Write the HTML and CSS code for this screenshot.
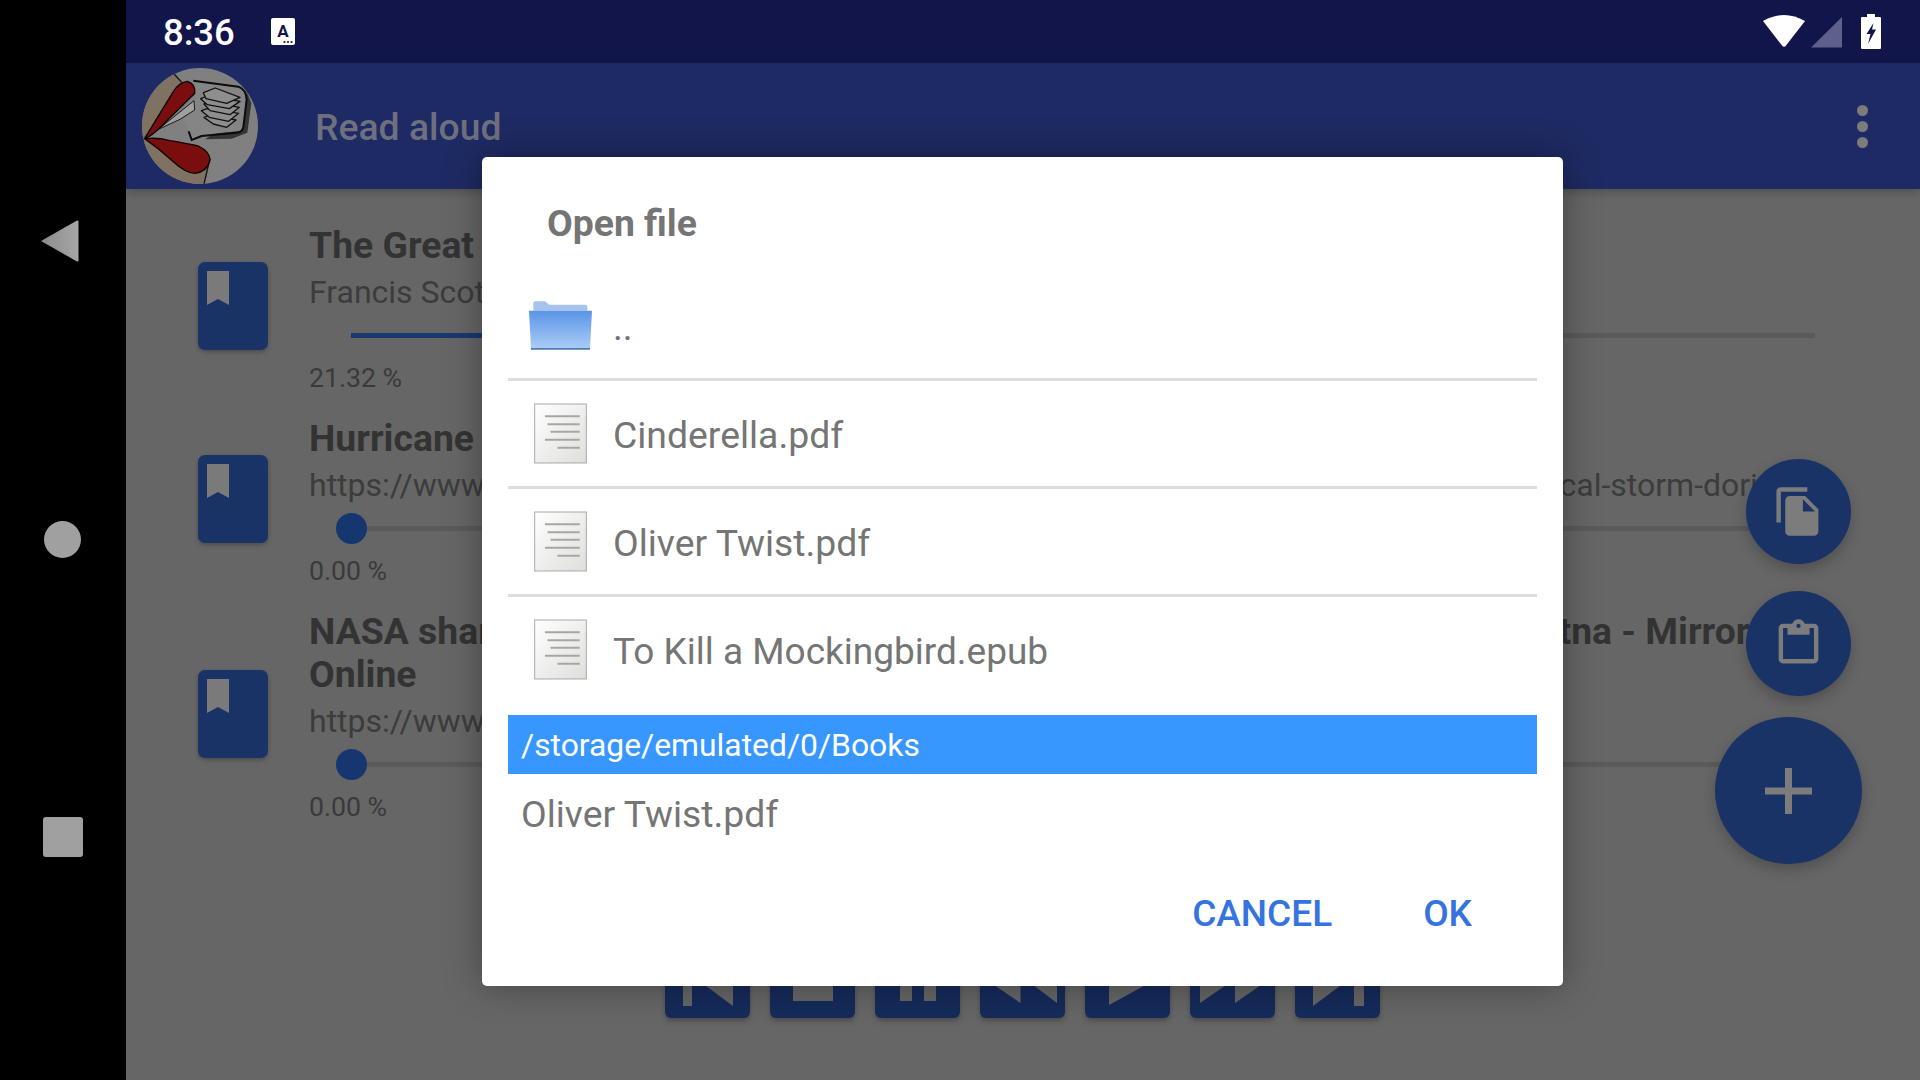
FILE: index.html
```html
<!DOCTYPE html>
<html lang="en">
<head>
<meta charset="utf-8">
<title>Read aloud</title>
<link rel="stylesheet" href="styles.css">
</head>
<body>
<div class="screen">
  <nav class="navbar">
    <svg class="nav-icon" viewBox="0 0 40 44"><defs><linearGradient id="backfill" x1="0" x2="1"><stop offset="0" stop-color="#8c8c8c"/><stop offset="1" stop-color="#a6a6a6"/></linearGradient></defs><path d="M1 22 37 1.500Q38.500 1 38.500 3V41Q38.500 43 37 42.500Z" fill="url(#backfill)"/></svg>
    <div class="nav-circle"></div>
    <div class="nav-square"></div>
  </nav>
  <div class="main">
    <header class="statusbar">
      <span class="clock">8:36</span>
      <svg class="a-icon" viewBox="0 0 24 27"><rect width="24" height="27" rx="2" fill="#fff"/><text x="12" y="19" class="a-letter">A</text><circle cx="13.500" cy="24" r="1.100" fill="#11154a"/><circle cx="17" cy="24" r="1.100" fill="#11154a"/><circle cx="20.500" cy="24" r="1.100" fill="#11154a"/></svg>
      <span class="spacer"></span>
      <svg class="wifi" viewBox="0 0 44 36"><path d="M1 7Q22-5 43 7L24 31.500Q22 34 20 31.500Z" fill="#fff"/></svg>
      <svg class="signal" viewBox="0 0 32 32"><path d="M0 31.500 31 1V31.500Z" fill="#5f5f8c"/></svg>
      <svg class="battery" viewBox="0 0 20 35"><path d="M6 0H14V3H19Q20 3 20 4V34Q20 35 19 35H1Q0 35 0 34V4Q0 3 1 3H6Z" fill="#fff"/><path d="M12.500 9 5.500 20H9.500L7 30 15 15.500H11Z" fill="#11154a"/></svg>
    </header>
    <div class="appbar">
      <svg class="logo" viewBox="36 24 348 348">
        <defs><clipPath id="logoclip"><circle cx="210" cy="198" r="174"/></clipPath></defs>
        <g clip-path="url(#logoclip)">
          <rect x="36" y="24" width="348" height="348" fill="#808080"/>
          <path d="M36 24H128L155 65 130 95 45 235 120 240 200 255 240 295 222 384H36Z" fill="#7f7262"/>
          <path d="M132 42 156 68M240 295 222 372" fill="none" stroke="#141414" stroke-width="4"/>
          <path d="M350 95 364 130 352 218 305 236 225 238 250 222 340 205Z" fill="#1c1c1c" opacity=".75"/>
          <path d="M196 66 325 82Q345 88 347 118L338 200Q335 214 320 214L215 224 185 236 178 212 160 180 196 120Z" fill="#858585"/>
          <path d="M190 62 325 80Q348 88 350 118L340 202Q336 218 320 218L215 228 185 240 176 214" fill="none" stroke="#0c0c0c" stroke-width="6"/>
          <path d="M85 208 192 122 194 150 150 178Z" fill="#a0a0a0" stroke="#1a1a1a" stroke-width="3"/>
          <path d="M44 235 130 95Q145 68 172 64 198 72 194 100L85 208Q62 230 44 235Z" fill="#7a0d0d" stroke="#0e0606" stroke-width="4"/>
          <path d="M44 236Q85 232 120 242 170 250 205 258 240 275 240 300 232 335 195 340 165 338 130 305 90 268 44 236Z" fill="#7a0d0d" stroke="#0e0606" stroke-width="4"/>
          <g fill="#8e8e8e" stroke="#111" stroke-width="4" stroke-linejoin="round">
            <path d="M222 172 240 166 318 180 290 202 250 192Z"/>
            <path d="M214 152 232 146 326 160 296 184 238 172Z"/>
            <path d="M222 132 240 126 328 142 300 164 240 152Z"/>
            <path d="M212 116 232 108 330 124 298 146 232 134Z"/>
            <path d="M220 98 256 84 330 112 290 130 228 116Z"/>
          </g>
        </g>
      </svg>
      <span class="app-title">Read aloud</span>
      <span class="spacer"></span>
      <div class="overflow"><i></i><i></i><i></i></div>
    </div>
    <div class="content">
      <article class="book">
        <svg class="book-icon" viewBox="0 0 70 88"><rect width="70" height="88" rx="7" fill="#193366"/><path d="M9 9H31V43L20 37 9 43Z" fill="#7a7a7a"/></svg>
        <div class="book-text">
          <h2 class="book-title">The Great Gatsby</h2>
          <p class="book-sub">Francis Scott Fitzgerald</p>
          <div class="slider"><div class="slider-done" style="width:21.32%"></div><div class="slider-thumb" style="left:21.32%"></div></div>
          <p class="book-pct">21.32 %</p>
        </div>
      </article>
      <article class="book">
        <svg class="book-icon" viewBox="0 0 70 88"><rect width="70" height="88" rx="7" fill="#193366"/><path d="M9 9H31V43L20 37 9 43Z" fill="#7a7a7a"/></svg>
        <div class="book-text">
          <h2 class="book-title">Hurricane Dorian forecast</h2>
          <p class="book-sub">https://www.nhc.noaa.gov/archive/2019/news/atlantic/hurricane-season/2019/ux/tropical-storm-dorian</p>
          <div class="slider"><div class="slider-thumb"></div></div>
          <p class="book-pct">0.00 %</p>
        </div>
      </article>
      <article class="book">
        <svg class="book-icon" viewBox="0 0 70 88"><rect width="70" height="88" rx="7" fill="#193366"/><path d="M9 9H31V43L20 37 9 43Z" fill="#7a7a7a"/></svg>
        <div class="book-text">
          <h2 class="book-title">NASA shares stunning satellite images of Italy's erupting volcano, Mount Etna - Mirror Online</h2>
          <p class="book-sub">https://www.mirror.co.uk/science/nasa-shares-image-mount-etna</p>
          <div class="slider"><div class="slider-thumb"></div></div>
          <p class="book-pct">0.00 %</p>
        </div>
      </article>
      <div class="controls">
        <svg class="ctl" viewBox="0 0 85 85"><path d="M18 12H27V73H18ZM68 12V73L27 42.500Z"/></svg>
        <svg class="ctl" viewBox="0 0 85 85"><path d="M23 18H63V68H23Z"/></svg>
        <svg class="ctl" viewBox="0 0 85 85"><path d="M25 18H37V68H25ZM49 18H61V68H49Z"/></svg>
        <svg class="ctl" viewBox="0 0 85 85"><path d="M40.500 15V70L0 42.500ZM77 15V70L40.500 42.500Z"/></svg>
        <svg class="ctl" viewBox="0 0 85 85"><path d="M24 13V72L78 42.500Z"/></svg>
        <svg class="ctl" viewBox="0 0 85 85"><path d="M10 15V70L50 42.500ZM45 15V70L85 42.500Z"/></svg>
        <svg class="ctl" viewBox="0 0 85 85"><path d="M18 12V73L59 42.500ZM59 12H69V73H59Z"/></svg>
      </div>
    </div>
  </div>

  <button class="fab fab-copy"><svg viewBox="0 0 24 24"><path d="M16 1H4c-1.100 0-2 .9-2 2v14h2V3h12V1zm-1 4l6 6v10c0 1.100-.9 2-2 2H7.990C6.890 23 6 22.100 6 21l.01-14c0-1.100.89-2 1.990-2h7zm-1 7h5.500L14 6.500V12z"/></svg></button>
  <button class="fab fab-clip"><svg viewBox="0 0 24 24"><path d="M19 3h-4.180C14.400 1.840 13.300 1 12 1c-1.300 0-2.400.84-2.820 2H5c-1.100 0-2 .9-2 2v14c0 1.100.9 2 2 2h14c1.100 0 2-.9 2-2V5c0-1.100-.9-2-2-2zm-7 0c.55 0 1 .45 1 1s-.45 1-1 1-1-.45-1-1 .45-1 1-1zm7 16H5V5h2v3h10V5h2v14z"/></svg></button>
  <button class="fab fab-add"><svg viewBox="0 0 47 46"><path d="M20 0H27V19.500H47V26.500H27V46H20V26.500H0V19.500H20Z"/></svg></button>

  <section class="dialog">
    <h1 class="dlg-title">Open file</h1>
    <ul class="file-list">
      <li class="file-row">
        <span class="file-icon"><svg class="folder" viewBox="84 60 195 152"><defs><linearGradient id="folderfill" x1="0" x2="0" y1="0" y2="1"><stop offset="0" stop-color="#5b94e6"/><stop offset="1" stop-color="#a9ccf6"/></linearGradient></defs><path d="M100 92V68Q100 63 106 63H135L148 74H256Q262 74 262 80V92Z" fill="#a5c3ec"/><path d="M87 92H276L270 204H93Z" fill="url(#folderfill)"/><path d="M93 206H270" stroke="#4f79b4" stroke-width="5"/></svg></span>
        <span class="file-name">..</span>
      </li>
      <li class="file-row">
        <span class="file-icon"><svg class="doc" viewBox="102 370 160 182"><defs><linearGradient id="docfill" x1="0" x2="1" y1="0" y2="1"><stop offset="0" stop-color="#ffffff"/><stop offset="1" stop-color="#dededa"/></linearGradient></defs><rect x="104" y="372" width="156" height="178" fill="url(#docfill)" stroke="#a8a8a8" stroke-width="3"/><path d="M135 409H240M143 433H240M152 456H240M135 480H240M173 504H240" stroke="#a6a6a6" stroke-width="6"/></svg></span>
        <span class="file-name">Cinderella.pdf</span>
      </li>
      <li class="file-row">
        <span class="file-icon"><svg class="doc" viewBox="102 370 160 182"><rect x="104" y="372" width="156" height="178" fill="url(#docfill)" stroke="#a8a8a8" stroke-width="3"/><path d="M135 409H240M143 433H240M152 456H240M135 480H240M173 504H240" stroke="#a6a6a6" stroke-width="6"/></svg></span>
        <span class="file-name">Oliver Twist.pdf</span>
      </li>
      <li class="file-row file-row-last">
        <span class="file-icon"><svg class="doc" viewBox="102 370 160 182"><rect x="104" y="372" width="156" height="178" fill="url(#docfill)" stroke="#a8a8a8" stroke-width="3"/><path d="M135 409H240M143 433H240M152 456H240M135 480H240M173 504H240" stroke="#a6a6a6" stroke-width="6"/></svg></span>
        <span class="file-name file-name-long">To Kill a Mockingbird.epub</span>
      </li>
    </ul>
    <div class="path-bar">/storage/emulated/0/Books</div>
    <div class="file-input">Oliver Twist.pdf</div>
    <div class="dlg-actions">
      <span class="dlg-btn">CANCEL</span>
      <span class="dlg-btn">OK</span>
    </div>
  </section>
</div>
</body>
</html>
```

FILE: styles.css
```css
* { box-sizing: border-box; }
html, body { margin: 0; padding: 0; }
body { font-family: Roboto, "Liberation Sans", sans-serif; background: #000; }
h1, h2, p, ul { margin: 0; padding: 0; }
.screen { position: relative; display: flex; width: 1920px; height: 1080px; overflow: hidden; background: #000; }

.navbar { width: 126px; flex: none; display: flex; flex-direction: column; align-items: center; justify-content: center; gap: 258.5px; padding: 0 2px 5px 0; }
.nav-icon { width: 40px; height: 44px; margin-right: 4px; }
.nav-circle { width: 37px; height: 37px; border-radius: 50%; background: #a0a0a0; }
.nav-square { width: 40px; height: 40px; border-radius: 3px; background: #a0a0a0; margin-left: 2px; }

.main { flex: 1; display: flex; flex-direction: column; min-width: 0; }
.spacer { flex: 1; }

.statusbar { height: 63px; flex: none; display: flex; align-items: center; padding: 0 39px 0 37px; background: #11154a; }
.clock { color: #fff; font-size: 36.5px; font-weight: 500; width: 108px; padding-top: 2px; }
.a-icon { width: 24px; height: 27px; }
.a-letter { font-size: 17px; font-weight: 700; fill: #11154a; text-anchor: middle; font-family: Roboto, sans-serif; }
.wifi { width: 44px; height: 36px; }
.signal { width: 32px; height: 32px; margin-left: 5px; }
.battery { width: 20px; height: 35px; margin-left: 18px; }

.appbar { height: 126px; flex: none; display: flex; align-items: center; padding: 0 52px 0 16px; background: #1e2a63; position: relative; box-shadow: 0 4px 8px rgba(0,0,0,.18); }
.logo { width: 116px; height: 116px; flex: none; }
.app-title { margin-left: 57px; padding-top: 2px; color: #6e7080; font-size: 37.33px; font-weight: 500; }
.overflow { display: flex; flex-direction: column; gap: 5px; }
.overflow i { display: block; width: 11px; height: 11px; border-radius: 50%; background: #7c7c7c; }

.content { flex: 1; display: flex; flex-direction: column; padding: 35px 0 62px 72px; background: #666; min-height: 0; }
.book { display: flex; align-items: center; gap: 41px; margin-bottom: 20px; }
.book-icon { width: 70px; height: 88px; flex: none; margin-bottom: 9px; filter: drop-shadow(0 2px 2px rgba(0,0,0,.25)); }
.book-text { width: 1549px; min-width: 0; }
.book-title { font-size: 37.33px; line-height: 43px; font-weight: 700; color: #333; }
.book-sub { font-size: 32px; line-height: 41px; margin-top: 5px; color: #3c3c3c; white-space: nowrap; }
.slider { position: relative; height: 5px; margin: 20px 43px 22px 42px; background: #5a5a5a; }
.slider-done { height: 5px; background: #1a3870; }
.slider-thumb { position: absolute; left: 0; top: -13px; width: 31px; height: 31px; margin-left: -15px; border-radius: 50%; background: #163670; }
.book-pct { font-size: 26.67px; line-height: 37px; color: #3a3a3a; }

.controls { margin-top: auto; margin-right: 73px; display: flex; justify-content: center; gap: 20px; }
.ctl { width: 85px; height: 85px; border-radius: 6px; background: #152b5a; fill: #666; box-shadow: 0 3px 5px rgba(0,0,0,.25); }

.fab { position: absolute; display: flex; align-items: center; justify-content: center; padding: 0; border: 0; border-radius: 50%; background: #193366; box-shadow: 0 6px 14px rgba(0,0,0,.22); }
.fab svg { fill: #7c7c7c; }
.fab-copy, .fab-clip { left: 1746px; width: 105px; height: 105px; }
.fab-copy svg, .fab-clip svg { width: 53px; height: 53px; }
.fab-copy { top: 459px; }
.fab-clip { top: 591px; }
.fab-add { left: 1715px; top: 717px; width: 147px; height: 147px; }
.fab-add svg { width: 47px; height: 46px; }

.dialog { position: absolute; left: 482px; top: 157px; width: 1081px; height: 829px; display: flex; flex-direction: column; padding: 44px 26px 0; background: #fff; border-radius: 5px; box-shadow: 0 0 36px rgba(0,0,0,.35); color: #757575; }
.dlg-title { font-size: 37.33px; line-height: 45px; font-weight: 700; padding-left: 39px; }
.file-list { list-style: none; margin-top: 27px; }
.file-row { height: 108px; display: flex; align-items: center; border-bottom: 3px solid #ddd; }
.file-row-last { border-bottom-color: transparent; }
.file-icon { width: 105px; flex: none; display: flex; justify-content: center; }
.folder { width: 65px; height: 51px; }
.doc { width: 53px; height: 61px; }
.file-name { font-size: 37.33px; padding-top: 3px; }
.file-name-long { font-size: 37px; }
.path-bar { height: 59px; margin-top: 10px; padding-left: 13px; background: #3797ff; color: #fff; font-size: 31.85px; line-height: 61px; }
.file-input { height: 80px; padding-left: 13px; font-size: 37.33px; line-height: 81px; }
.dlg-actions { display: flex; justify-content: flex-end; gap: 91px; margin-top: 38px; padding-right: 65px; }
.dlg-btn { color: #3473e0; font-size: 37px; line-height: 44px; font-weight: 500; }
```
